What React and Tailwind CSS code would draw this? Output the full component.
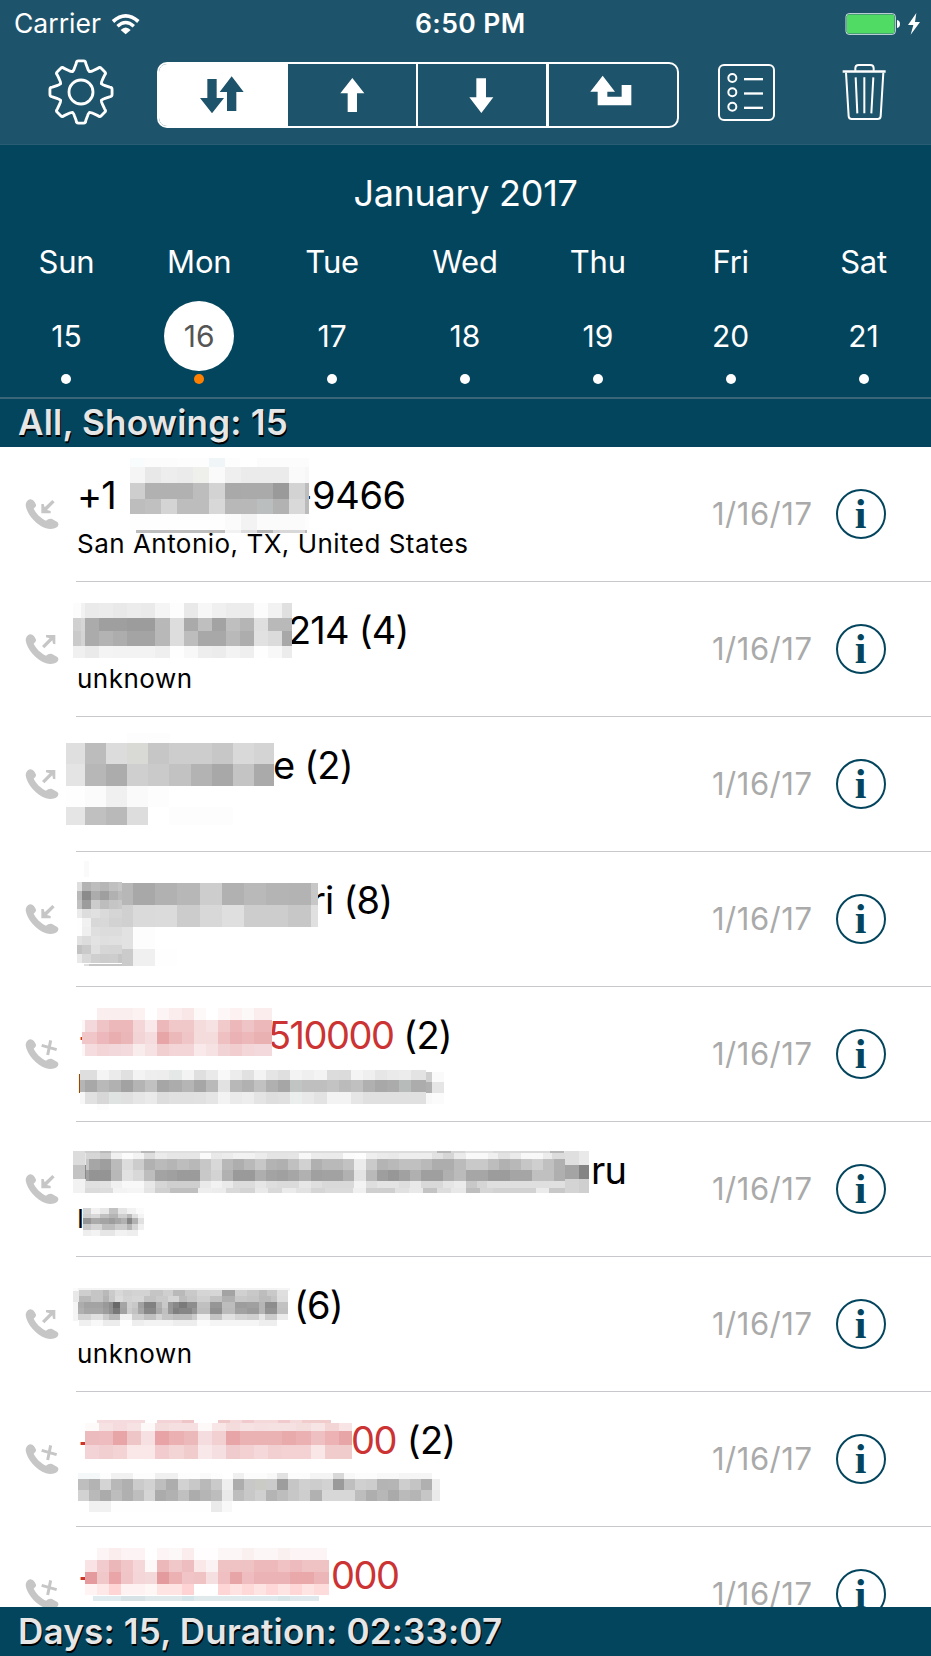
import React from "react";

/* Pixel mosaics: "y0 y1 x0 | x:fill x:fill ..." in thirds of a pixel; each fill runs up to its x. */
const MOSAICS = {
  a: `54 80 390 | 434:f8fcfd 530:fc 626:fd 675:f0f5f8 720:fd 770:ff 927:fc
80 128 390 | 434:f5 482:e8 530:ed 578:eb 626:efefec 675:fa 722:ef 866:eb 915:fa 927:f7
128 176 390 | 434:ce 578:b1 626:bd 675:d3 722:a9 818:aa 866:9a 915:d3 927:bd
176 223 390 | 434:bd 482:c0 530:d4 626:bd 675:d8 770:b8 820:babebe 866:b2 915:d9 927:bb
223 270 390 | 675:fe 722:fb 770:f3 915:fb 927:fd
270 278 408 | 675:bd 722:f2 770:dd 820:b5 915:d8 921:bb`,
  b: `490 533 219 | 243:fc 254:f2 296:ea 338:ec 380:e9 423:ec 465:ea 509:f5 551:fd 593:e9 636:f7 678:f0 762:ec 804:fc 846:f2 876:e0
533 574 219 | 243:d0 254:d6 296:ab 380:9f 465:9c 509:b8 551:dd 593:aa 636:bf 678:a3 720:bf 762:b5 804:df 876:b9
574 617 219 | 243:ca 254:d4 296:ab 338:b3 380:ad 465:a4 509:b8 551:dd 593:bd 678:a8 720:b9 762:ad 804:e1 846:db 876:a8
617 654 219 | 254:f0 296:ea 338:f4 465:f3 509:ef 551:fe 593:f8 636:ee 678:ec 720:f3 762:ef 804:fe 846:f8 876:ec`,
  c: `68 99 380 | 509:fd
99 163 198 | 254:df 318:bc 381:dc 444:d9d9d5 508:c6 635:cd 698:c7 762:d9 822:d4
163 228 198 | 254:e4 318:b7 381:ac 444:cf 508:ca 572:c2 635:b3 698:a8 762:c4 822:aa
228 291 198 | 254:fe 318:fb 381:f0 444:fa 508:fd
291 345 198 | 254:e5 318:c0 381:b9 444:dd 508:ff 698:fd`,
  d: `453 500 252 | 266:fa
516 543 231 | 245:de 273:b3 300:bd 327:b6 354:c0 366:c6
543 570 231 | 245:b9 273:8b 300:ac 327:9f 354:b1 366:bb
570 597 231 | 245:c0 273:9c 300:cc 327:bd 354:c5 366:c8
597 624 231 | 245:eb 273:dd 300:e1 327:da 366:d5
624 651 231 | 245:fe 273:f1 300:d8 327:d8 366:d2
651 678 231 | 245:fe 273:ef 300:df 366:dc
678 705 231 | 245:e2 273:dc 300:e3 327:df 366:e0
705 732 231 | 245:c2 273:ca 300:e0 327:d6 366:d5
732 760 231 | 245:e9 273:d9 300:cf 327:cc 354:cd 366:c5
519 585 366 | 399:b7 465:a8 532:b1 599:b7 665:cd 732:b1 798:b9 866:b4 932:b3 954:c7
585 652 366 | 399:d0 465:da 532:db 599:cc 665:d8 732:df 798:cd 864:cd 932:c7 954:e0
652 718 366 | 399:e2 465:fd
718 768 366 | 399:cb 465:f0 532:fe
762 768 252 | 266:e0 366:c6`,
  e: `84 120 290 | 399:fbeeef 435:fdf2f2 471:ff 508:fdf5f5 545:fbeded 581:f9e6e6 617:fdf9f9 653:ff 690:fdf7f7 726:fdf1f1 762:fdf8f8 815:fbeded
120 156 247 | 254:fdf6f6 290:f3d9db 327:efc4c6 399:ecb8ba 435:f4d6d8 471:f9e9ea 508:edb8ba 581:f0c8ca 617:f4dcdd 653:f7e2e3 690:f1cacc 726:ecb8ba 762:efc4c6 815:ecb8ba
156 192 247 | 290:f0c6c8 327:ecb8bb 363:e9aeb0 399:ebb6b8 435:f2d4d6 471:f5dddf 508:e7a5a7 545:ecb9bb 581:efc5c7 653:f4dcdd 690:efc0c2 726:eab2b4 762:ecb8ba 815:eab1b3
192 228 247 | 254:fdf6f6 290:f5dddf 327:f3d5d7 363:f2d8da 399:f3dadc 435:f9eced 471:f6e2e3 508:f1cfd1 581:f3d5d7 617:fae9ea 653:f6e2e3 690:f2d3d5 726:f1cdcf 762:f3d6d8 815:f3d9db
270 300 240 | 290:de 327:f4 363:eb 399:e0 435:f3 471:ee 508:ed 545:e4e8e7 581:f3 617:df 653:e9 690:f8 726:ec 762:e1 798:f3 835:e5 870:df 906:f3 943:ef 980:f3 1016:dc 1052:db 1088:f4 1125:ef 1161:e6 1197:ea 1234:ec 1277:e3
300 336 240 | 254:b5 290:a8 327:b9 363:b1 399:a2 435:b4 471:c1 508:a6 545:ac 581:b5 617:a6 653:b9 690:e2 726:b8 762:b1 798:c1 835:b0 870:a6 906:c0c4c3 980:bf 1016:c3 1052:bb 1088:c0 1125:b0 1161:a8 1197:ab 1234:b7bbba 1277:ac
336 372 240 | 254:f7 290:e1 327:d7 363:dfe3e2 399:e0 435:e6 471:ea 508:dd 581:e0 617:e1 653:e5 690:f3 726:ea 762:ed 798:e4 835:de 870:e0 906:eaeeec 943:e9 980:e3 1052:f3 1088:e6 1277:e0
276 305 1277 | 1296:cf 1332:fa
305 339 1277 | 1296:b0 1332:e5
339 372 1277 | 1296:f8 1332:fb
372 390 290 | 327:fc`,
  f: `513 555 219 | 254:dc 1695:e6 1736:df 1767:e9
555 597 219 | 254:c3 258:8a 1695:b0 1736:a4 1767:84
597 639 219 | 254:f2 1695:e0 1736:d4 1767:cf
513 519 254 | 300:cd 333:b9 423:d9 465:b8 632:df 765:dc 897:e0 1060:dc 1312:dc 1354:b8 1396:d5 1480:e0 1650:d9 1692:b8
519 537 258 | 300:d6 333:cd 366:f0 399:fb 432:f3 465:dd 500:eb 600:e6 632:fa 665:e9 700:ec 765:f2 800:ec 865:e4 897:e5 932:f8 965:ec 1030:eb 1065:fb 1098:fd 1130:ef 1165:eb 1197:e9 1297:ee 1329:e2 1363:d6 1398:eb 1463:f9 1495:f0 1530:e2 1563:ea 1630:f8 1655:ec 1695:dc
537 570 258 | 267:c7 300:a6 333:9e 366:bb 399:dc 432:cc 465:b1 500:ba 532:b5 566:bd 599:b8 632:c7 665:d8 699:b8 732:ae 765:b9 798:c7 832:b3 865:b0 897:c0 932:d1 965:b0 1030:b9 1062:c2 1097:eb 1130:ca 1165:b4 1197:b9 1264:c0 1297:b9 1363:ad 1398:bb 1463:c9 1497:bd 1530:b1 1563:b8 1597:c6 1630:cf 1662:c0 1695:b0
570 603 258 | 267:a2 333:94 366:b8 399:e1 432:d8 465:bd 500:a3 532:a0 599:9b 632:c8 665:d3 699:b1 765:9a 798:ae 832:a3 865:a0 897:a6 932:b1 965:a0 1030:a2 1062:b1 1097:e3 1130:b9 1165:9e 1197:97 1230:a1 1264:b0 1330:9f 1363:b0 1398:bb 1463:a6 1530:9c 1597:a5 1662:c0 1695:af
603 624 254 | 300:e0 333:e2 366:f0 432:f8 465:e8 500:d6 599:cf 632:ea 665:f2 699:ea 765:dc 798:e6 832:de 897:db 932:e7 965:df 1062:d9 1097:f3 1130:de 1197:e4 1230:de 1264:e9 1330:d9 1363:e5 1398:eb 1430:c8 1462:d5 1650:df 1695:e0
624 639 254 | 300:db 339:dd 380:f3 432:f5 465:e5 509:d0 593:bf 636:ee 678:ec 720:d9 765:d4 804:e9 846:d9 888:eb 932:e2 975:d5 1060:db 1097:f0 1185:cf 1228:e1 1270:e9 1312:c3 1354:dd 1397:e8 1440:be 1480:d6 1608:d2 1648:eb 1695:c8
684 702 250 | 272:d4 299:f2 326:e7 353:c2 380:e5 407:f2 433:fb
702 713 250 | 272:ce 299:d8 326:c0 353:b4 380:cf 397:b9 414:e0 433:f4
713 731 250 | 272:96 299:ab 326:a4 344:9d 362:a7 380:b2 397:87 414:b1 433:e0
731 749 250 | 272:c8 307:d5 344:bd 380:cc 397:b6 414:d5 433:f0
749 767 250 | 272:ee 299:f3 344:e6 380:f2 414:ee`,
  g: `113 122 219 | 234:fb 830:f3 870:f5
122 157 219 | 237:e8
157 213 219 | 234:f5
120 138 237 | 272:ce 308:c5 326:b9 344:cb 370:d8 397:d0 450:d3 490:c5 520:cf 555:b9 592:c9 630:d5 665:d6 704:a3 740:d0 776:c8 800:bd 830:c9 865:df
138 157 237 | 272:b9 308:c5 326:b4 344:c9 370:dc 397:d3 432:d6 468:c3 505:ca 538:d5 560:bd 592:c6 630:d0 665:c2 704:b0 740:c8 776:c5 812:bb 830:c4 865:dd
157 175 234 | 252:ac 308:a3 326:99 340:8e 361:69 380:a5 397:cf 414:c8 432:a1 468:81 486:b0 505:c9 520:97 538:88 560:7a 592:8d 630:c0 665:96 704:bd 740:9d 776:a0 795:b5 830:8d 865:c2
175 193 234 | 252:b0 308:a7 326:9d 340:90 361:78 380:a2 397:cc 414:c2 432:a6 468:88 486:aa 505:c0 520:98 538:80 575:86 592:96 630:bd 665:90 704:bb 740:a2 776:9b 795:b5 830:93 865:c0
193 210 234 | 272:d4 308:e0 326:cb 361:b8 397:f2 432:cf 468:c0 486:d4 520:c4 575:bd 592:cc 630:ec 665:c4 704:e1 740:d5 776:d0 795:e6 830:cc 865:eb
210 227 237 | 272:f0 308:f8 361:ec 397:fe 432:ee 520:f3 592:ed 630:fb 704:f5 776:f5 830:ee`,
  h: `510 519 290 | 435:f5dbdd 471:ff 545:f3d3d5 581:efc5c8 653:ff 690:efc8ca 726:f5d8da 762:f0cacc 835:f5d8da 870:f0cacc 906:f5dadc 992:f0cccd
519 544 254 | 297:fffafa 339:f7e2e3 381:f5dbdd 423:f6e2e3 466:fdf9f9 508:f4dbdc 593:f6dfe0 636:fef9f9 678:f8e5e6 720:f4dcdd 762:f6e2e3 805:f6dfe0 889:f6e1e2 932:f4dddd 974:f7e5e6 1016:f3d5d6 1056:f8e4e5
544 585 254 | 297:ecbbbd 339:eebcbe 381:e8a5a7 423:efc6c8 466:f6e0e1 508:e7a3a5 551:ebb0b2 593:ecb9bb 636:f5dcde 678:f2d0d2 720:e7a5a7 847:ebb2b4 889:e9aaac 932:eab0b2 974:efc0c2 1016:ecb2b4 1056:e7a5a7
585 627 254 | 297:f3d3d5 339:f1cfd0 381:f3d3d4 466:fae7e8 508:f1cbcd 551:f3d5d6 593:f0cccd 636:f9e8e9 678:f6dfe0 720:f0cbcd 762:f3d1d2 805:f5d8da 847:f2d0d2 932:f4d2d3 974:f9e7e8 1056:f1cccd
669 687 234 | 300:f4f8f8 333:fd 399:f1 466:fd 533:f0 600:fd 632:fa 665:fd 699:ff 732:f0 800:fc 830:f8 864:e2 930:fc 998:f4 1031:d8 1064:f8 1130:fc 1197:f8 1296:f5
687 720 234 | 266:be 300:b3 333:d4 366:b8 399:b0 432:cb 466:d2 499:be 533:ad 566:d2 600:c8 632:b9 665:ca 699:ef 732:ad 765:c8 798:cbcbc5 831:cb 864:9d 897:c6 930:d0 965:cd 998:d2 1031:9a 1064:bf 1097:d0 1131:cd 1164:b4 1197:b5 1230:ce 1263:c4 1296:b0 1320:ee
720 754 234 | 266:d2 300:b9 333:ab 366:bd 399:b0 432:be 466:d5 499:ab 533:b1 566:c0 600:ac 632:b5 665:bd 699:e9 732:bd 765:c8 798:d0 831:b4 864:bd 897:c7 930:ce 965:b1 1064:d7 1097:bd 1131:ae 1164:b7 1197:aa 1230:ba 1263:b5 1296:c6 1320:ea
754 785 266 | 333:f1 632:fe 665:ea 697:f8`,
  i: `894 930 290 | 327:fdf5f5 363:fbeced 435:fdf3f4 471:ff 508:fdf4f5 545:fdf8f8 581:fbeced 653:fffdfd 726:fdf6f6 762:fbf0f0 835:fdf6f6 870:fbf0f0 980:fdf5f5
930 966 254 | 290:f9e3e5 327:f1cbcd 363:ebb7b9 399:f1c6c8 435:f5d7d9 471:fef9f9 508:ecb8ba 545:f1c8ca 581:edbdbf 617:fae7e8 653:fbf3f3 762:efc2c4 835:edb9bb 870:f0c2c4 906:edbbbd 943:efc2c4 987:efc2c4
966 1002 254 | 290:e59b9e 327:f1c8ca 363:e9a5a7 399:f0c5c7 435:f4d6d8 471:f4d9da 508:e49b9d 545:ebb1b3 581:f1c5c7 617:efc2c4 653:f6dfe0 690:efbfc1 726:e8a5a7 762:efbdbf 870:ebb3b5 943:e9a8aa 987:ecb5b7
1002 1034 254 | 290:fff3f3 327:ffe8e8 363:ffd5d5 435:fff2f2 471:fff6f6 545:ffe4e4 581:ffd3d3 653:ff 690:ffd6d6 726:ffe2e2 762:ffd8d8 799:ffe4e4 835:ffd9d9 870:ffe4e4 906:ffd7d7 943:ffe4e4 987:ffdcdc
1037 1053 279 | 363:dfebee 435:d7e2e7 545:dfe9ec 581:d5e4e8 725:e0e9ec 835:dde9ed 870:d7e4e8 957:dfe8ec`,
};

function Mosaic({ id, top }) {
  const cells = [];
  MOSAICS[id].split("\n").forEach((line, r) => {
    const [head, body] = line.split(" | ");
    const [y0, y1, start] = head.split(" ").map(Number);
    let x = start;
    body.split(" ").forEach((c, i) => {
      const [end, hex] = c.split(":");
      cells.push(
        <rect key={r + "-" + i} x={x} y={y0} width={end - x} height={y1 - y0} fill={"#" + (hex.length === 2 ? hex + hex + hex : hex)} />
      );
      x = Number(end);
    });
  });
  return (
    <svg className="pointer-events-none absolute inset-0 h-[135px] w-[650px]" viewBox={`0 ${top} 1950 405`} shapeRendering="crispEdges" aria-hidden="true">
      {cells}
    </svg>
  );
}

function gearPath() {
  const p = (a, r, base) => {
    const t = ((a + base) * Math.PI) / 180;
    return `${(r * Math.sin(t)).toFixed(1)},${(-r * Math.cos(t)).toFixed(1)}`;
  };
  let d = "";
  for (let b = 0; b < 360; b += 45) {
    d += `${b ? "L" : "M"}${p(-16, 73, b)} L${p(-9.5, 87, b)} Q${p(-8.5, 94.5, b)} ${p(-4.5, 93.5, b)} L${p(4.5, 93.5, b)} Q${p(8.5, 94.5, b)} ${p(9.5, 87, b)} L${p(16, 73, b)} Q${p(17.5, 69.5, b)} ${p(22.5, 66, b)} Q${p(27.5, 69.5, b)} ${p(29, 73, b)} `;
  }
  return d + "Z";
}

const GEAR = gearPath();

function Gear() {
  return (
    <svg className="h-[68px] w-[68px]" viewBox="-102 -102 204 204" fill="none" stroke="#fff" strokeWidth="8.5" strokeLinejoin="round">
      <path d={GEAR} />
      <circle r="36" />
    </svg>
  );
}

function Segments() {
  return (
    <div className="flex h-[66px] w-[522px] overflow-hidden rounded-[10px] border-2 border-white">
      <div className="h-full w-[129px] bg-white">
        <svg className="h-[62px] w-[129px]" viewBox="477 192 387 186" fill="#1e546b">
          <path d="M622 237H650V294H672L636 340L600 294H622Z" />
          <path d="M695 229L731 276H709V333H681V276H659Z" />
        </svg>
      </div>
      <svg className="h-[62px] w-[128px]" viewBox="864 192 384 186" fill="#fff">
        <path d="M1057 234L1093 280H1071V336H1043V280H1021Z" />
      </svg>
      <div className="w-[2px] bg-white" />
      <svg className="h-[62px] w-[128px]" viewBox="-96 192 384 186" fill="#fff">
        <path d="M79 235H108V292H130L94 339L58 292H79Z" />
      </svg>
      <div className="w-[3px] bg-white" />
      <svg className="h-[62px] w-[128px]" viewBox="297 192 384 186" fill="#fff">
        <path d="M458 227L495 275H472V290H515V255H544V316H443V275H421Z" />
      </svg>
    </div>
  );
}

function ListIcon() {
  return (
    <svg className="h-[58px] w-[58px]" viewBox="801 189 174 174" fill="none" stroke="#fff">
      <rect x="807" y="195" width="165" height="165" rx="15" strokeWidth="6" />
      {[234, 277, 320].map((y) => (
        <g key={y}>
          <circle cx="847" cy={y} r="12" strokeWidth="6" />
          <path d={`M882 ${y + 3.5}H939`} strokeWidth="7" strokeLinecap="butt" />
        </g>
      ))}
    </svg>
  );
}

function TrashIcon() {
  return (
    <svg className="h-[58px] w-[44px]" viewBox="1177 189 132 174" fill="none" stroke="#fff" strokeWidth="6">
      <path d="M1217 212V205Q1217 195 1227 195H1262Q1272 195 1272 205V212" />
      <path d="M1179 214.5H1308" strokeWidth="7" />
      <path d="M1189 218L1197 349Q1198 357 1206 357H1284Q1292 357 1293 349L1301 218" />
      <path d="M1218 232L1223 340M1244 232V340M1271 232L1265 340" />
    </svg>
  );
}

function Wifi() {
  return (
    <svg className="h-[22px] w-[30px]" viewBox="335 33 90 66">
      <g fill="none" stroke="#fff">
        <path d="M341 58.5Q379 25 417 58.5" strokeWidth="11" />
        <path d="M354.5 73Q379 50 403.5 73" strokeWidth="10" />
      </g>
      <path d="M364 84Q379 69 394 84L379 97Z" fill="#fff" />
    </svg>
  );
}

function Battery() {
  return (
    <svg className="h-[24px] w-[77px] shrink-0" viewBox="1185 33 231 72">
      <rect x="1188" y="38" width="148" height="62" rx="9" fill="#1e546b" stroke="#fff" strokeWidth="2.5" />
      <rect x="1190.5" y="40.5" width="143" height="57" rx="6" fill="#4fdb64" />
      <path d="M1341 57Q1350 59 1350 69Q1350 79 1341 81Z" fill="#fff" />
      <path d="M1399 36L1374 72H1390L1382 101L1410 63H1395Z" fill="#fff" />
    </svg>
  );
}

const MARKS = {
  in: <path d="M124 192H131L134 202L157 180L164 187L141 210L152 213V220H124Z" />,
  out: <path d="M138 180H166V208L159 206L157 196L133 220L126 213L149 190L138 187Z" />,
  missed: <path d="M152 181L143 225M125 196L170 209" fill="none" stroke="#c6c6c6" strokeWidth="9" />,
};

function Phone({ kind }) {
  return (
    <svg className="h-[34px] w-[35px] shrink-0" viewBox="75 171 105 102" fill="#c6c6c6">
      <path d="M90 178C98 177 105 186 108 194C109 199 105 201 101 206C108 221 122 234 138 242C143 238 149 235 156 237L172 246C177 250 176 257 170 262C161 268 149 268 138 265C108 255 80 222 77 196C77 187 82 180 90 178Z" />
      {MARKS[kind]}
    </svg>
  );
}

const DAYS = [
  ["Sun", 15], ["Mon", 16], ["Tue", 17], ["Wed", 18], ["Thu", 19], ["Fri", 20], ["Sat", 21],
];

function Row({ kind, id, top, name, sub }) {
  return (
    <div className="relative flex h-[135px] shrink-0">
      <div className="flex w-[76px] items-start pl-[25px] pt-[50px]">
        <Phone kind={kind} />
      </div>
      <div className="flex flex-1 border-b border-[#c8c7cc]">
        <div className="w-[636px] whitespace-pre pt-[26px] text-black">
          <div className="flex h-[44px] text-[38px] leading-[44px] tracking-[-0.8px]">{name}</div>
          <div className="pl-[1px] text-[26px] leading-[54px] tracking-[0.48px]">{sub}</div>
        </div>
        <div className="flex w-[124px] items-center text-[31px] tracking-[0.5px] text-[#aaaaaa]">1/16/17</div>
        <div className="flex items-center">
          <div className="flex h-[50px] w-[50px] items-center justify-center rounded-full border-2 border-[#04455e] pr-[1px] font-['Liberation_Serif',serif] text-[42px] font-bold leading-[46px] text-[#04455e]">
            i
          </div>
        </div>
      </div>
      <Mosaic id={id} top={top} />
    </div>
  );
}

const RED = "text-[#cc3333] tracking-[-1.5px]";

export default function App() {
  return (
    <div className="flex h-[1656px] w-[931px] flex-col overflow-hidden bg-white font-['Inter',sans-serif] text-white">
      <header className="h-[145px] border-b border-[#2a5d74] bg-[#1e546b]">
        <div className="flex h-[47px] items-center pl-[14px] text-[26.5px]">
          <div className="flex w-[400px] items-center gap-[10px]">
            <span>Carrier</span>
            <Wifi />
          </div>
          <div className="w-[431px] pl-[1px] font-semibold tracking-[0.4px]">6:50 PM</div>
          <Battery />
        </div>
        <div className="flex pt-[11px]">
          <div className="ml-[47px] w-[110px]"><Gear /></div>
          <div className="pt-[4px]"><Segments /></div>
          <div className="ml-[38px] pt-[5px]"><ListIcon /></div>
          <div className="ml-[67px] pt-[5px]"><TrashIcon /></div>
        </div>
      </header>

      <section className="h-[254px] border-b-2 border-[#3a6679] bg-[#04455e] pt-[26px]">
        <h1 className="text-center text-[36px] leading-[44px] tracking-[-0.3px]">January 2017</h1>
        <div className="mt-[27px] mr-[1px] grid grid-cols-7">
          {DAYS.map(([day, n]) => (
            <div key={n} className="flex flex-col items-center">
              <span className="text-[31px] leading-[40px] tracking-[-0.2px]">{day}</span>
              <span className={n === 16 ? "mt-[19px] flex h-[70px] w-[70px] items-center justify-center rounded-full bg-white pt-[1px] text-[30px] text-[#555555]" : "mt-[19px] flex h-[70px] w-[70px] items-center justify-center pt-[1px] text-[30px]"}>
                {n}
              </span>
              <span className={n === 16 ? "mt-[3px] h-[10px] w-[10px] rounded-full bg-[#ff8000]" : "mt-[3px] h-[10px] w-[10px] rounded-full bg-white"} />
            </div>
          ))}
        </div>
      </section>

      <div className="h-[48px] shrink-0 bg-[#04455e] pl-[18px] text-[35px] font-semibold leading-[47px] tracking-[0.2px] text-[#e6e6e6] [text-shadow:1px_2px_0_#000]">
        All, Showing: 15
      </div>

      <main className="flex h-[1160px] flex-col overflow-hidden">
        <Row kind="in" id="a" top={21} name={<><span className="ml-[1px] w-[218px]">+1</span><span className="tracking-[-0.4px]">-9466</span></>} sub="San Antonio, TX, United States" />
        <Row kind="out" id="b" top={426} name={<span className="ml-[212px]">214 (4)</span>} sub="unknown" />
        <Row kind="out" id="c" top={21} name={<span className="ml-[197px]">e (2)</span>} sub="" />
        <Row kind="in" id="d" top={426} name={<span className="ml-[235px]">ri (8)</span>} sub="" />
        <Row kind="missed" id="e" top={21} name={<><span className={"ml-[1px] w-[191px] " + RED}>+</span><span className={RED}>510000</span><span> (2)</span></>} sub="I" />
        <Row kind="in" id="f" top={426} name={<span className="ml-[515px]">ru</span>} sub="I" />
        <Row kind="out" id="g" top={21} name={<span className="ml-[218px]">(6)</span>} sub="unknown" />
        <Row kind="missed" id="h" top={426} name={<><span className={"ml-[1px] w-[274px] " + RED}>+</span><span className={RED}>00</span><span className="pl-[1px]"> (2)</span></>} sub="" />
        <Row kind="missed" id="i" top={831} name={<><span className={"ml-[1px] w-[254px] " + RED}>+</span><span className={RED}>000</span></>} sub="" />
      </main>

      <footer className="h-[49px] shrink-0 bg-[#04455e] pl-[18px] text-[35px] font-semibold leading-[48px] tracking-[0.2px] text-[#e6e6e6] [text-shadow:1px_2px_0_#000]">
        Days: 15, Duration: 02:33:07
      </footer>
    </div>
  );
}
